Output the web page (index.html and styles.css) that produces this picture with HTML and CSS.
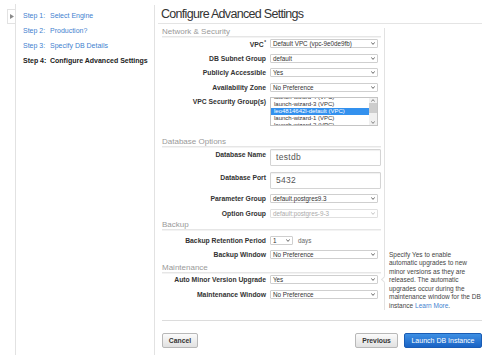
FILE: index.html
```html
<!DOCTYPE html>
<html lang="en">
<head>
    <meta charset="UTF-8">
    <title>Configure Advanced Settings</title>
    <link rel="stylesheet" href="styles.css">
</head>
<body>
    <div class="page">
        <!-- collapsed side tab -->
        <div class="edge">
            <div class="edge-tab">
                <svg width="4" height="5" viewBox="0 0 4 5"><polygon points="0,0 4,2.5 0,5" fill="#8a8a8a"/></svg>
            </div>
        </div>

        <!-- wizard steps -->
        <nav class="steps">
            <div class="step"><span class="step-num">Step 1:</span><a href="#">Select Engine</a></div>
            <div class="step"><span class="step-num">Step 2:</span><a href="#">Production?</a></div>
            <div class="step"><span class="step-num">Step 3:</span><a href="#">Specify DB Details</a></div>
            <div class="step current"><span class="step-num">Step 4:</span><span>Configure Advanced Settings</span></div>
        </nav>

        <main class="main">
            <h1 class="title">Configure Advanced Settings</h1>

            <div class="content">
                <div class="form">
                    <h2 class="section">Network &amp; Security</h2>
                    <div class="row">
                        <label>VPC<sup>*</sup></label>
                        <div class="select"><span>Default VPC (vpc-9e0de9fb)</span><svg width="4" height="3" viewBox="0 0 4 3"><polyline points="0.3,0.4 2,2.4 3.7,0.4" fill="none" stroke="#555" stroke-width="0.9"/></svg></div>
                    </div>
                    <div class="row">
                        <label>DB Subnet Group</label>
                        <div class="select"><span>default</span><svg width="4" height="3" viewBox="0 0 4 3"><polyline points="0.3,0.4 2,2.4 3.7,0.4" fill="none" stroke="#555" stroke-width="0.9"/></svg></div>
                    </div>
                    <div class="row">
                        <label>Publicly Accessible</label>
                        <div class="select"><span>Yes</span><svg width="4" height="3" viewBox="0 0 4 3"><polyline points="0.3,0.4 2,2.4 3.7,0.4" fill="none" stroke="#555" stroke-width="0.9"/></svg></div>
                    </div>
                    <div class="row">
                        <label>Availability Zone</label>
                        <div class="select"><span>No Preference</span><svg width="4" height="3" viewBox="0 0 4 3"><polyline points="0.3,0.4 2,2.4 3.7,0.4" fill="none" stroke="#555" stroke-width="0.9"/></svg></div>
                    </div>
                    <div class="row row-list">
                        <label>VPC Security Group(s)</label>
                        <div class="listbox">
                            <div class="list-items">
                                <div class="list-item">launch-wizard-4 (VPC)</div>
                                <div class="list-item">launch-wizard-3 (VPC)</div>
                                <div class="list-item selected">leo4814642l-default (VPC)</div>
                                <div class="list-item">launch-wizard-1 (VPC)</div>
                                <div class="list-item">launch-wizard-2 (VPC)</div>
                            </div>
                            <div class="scrollbar">
                                <svg width="4" height="3" viewBox="0 0 4 3"><polyline points="0.3,2.6 2,0.6 3.7,2.6" fill="none" stroke="#666" stroke-width="0.8"/></svg>
                                <div class="thumb"></div>
                                <svg width="4" height="3" viewBox="0 0 4 3"><polyline points="0.3,0.4 2,2.4 3.7,0.4" fill="none" stroke="#666" stroke-width="0.8"/></svg>
                            </div>
                        </div>
                    </div>

                    <h2 class="section">Database Options</h2>
                    <div class="row row-input">
                        <label>Database Name</label>
                        <div class="input">testdb</div>
                    </div>
                    <div class="row row-input">
                        <label>Database Port</label>
                        <div class="input">5432</div>
                    </div>
                    <div class="row">
                        <label>Parameter Group</label>
                        <div class="select"><span>default.postgres9.3</span><svg width="4" height="3" viewBox="0 0 4 3"><polyline points="0.3,0.4 2,2.4 3.7,0.4" fill="none" stroke="#555" stroke-width="0.9"/></svg></div>
                    </div>
                    <div class="row">
                        <label>Option Group</label>
                        <div class="select disabled"><span>default:postgres-9-3</span><svg width="4" height="3" viewBox="0 0 4 3"><polyline points="0.3,0.4 2,2.4 3.7,0.4" fill="none" stroke="#bbb" stroke-width="0.9"/></svg></div>
                    </div>

                    <h2 class="section section-tight">Backup</h2>
                    <div class="row row-first">
                        <label>Backup Retention Period</label>
                        <div class="select select-small"><span>1</span><svg width="4" height="3" viewBox="0 0 4 3"><polyline points="0.3,0.4 2,2.4 3.7,0.4" fill="none" stroke="#555" stroke-width="0.9"/></svg></div>
                        <span class="unit">days</span>
                    </div>
                    <div class="row">
                        <label>Backup Window</label>
                        <div class="select"><span>No Preference</span><svg width="4" height="3" viewBox="0 0 4 3"><polyline points="0.3,0.4 2,2.4 3.7,0.4" fill="none" stroke="#555" stroke-width="0.9"/></svg></div>
                    </div>

                    <h2 class="section">Maintenance</h2>
                    <div class="row row-pointer">
                        <label>Auto Minor Version Upgrade</label>
                        <div class="select"><span>Yes</span><svg width="4" height="3" viewBox="0 0 4 3"><polyline points="0.3,0.4 2,2.4 3.7,0.4" fill="none" stroke="#555" stroke-width="0.9"/></svg></div>
                    </div>
                    <div class="row">
                        <label>Maintenance Window</label>
                        <div class="select"><span>No Preference</span><svg width="4" height="3" viewBox="0 0 4 3"><polyline points="0.3,0.4 2,2.4 3.7,0.4" fill="none" stroke="#555" stroke-width="0.9"/></svg></div>
                    </div>
                </div>

                <div class="help">
                    Specify Yes to enable<br>
                    automatic upgrades to new<br>
                    minor versions as they are<br>
                    released. The automatic<br>
                    upgrades occur during the<br>
                    maintenance window for the DB<br>
                    instance <a href="#">Learn More</a>.
                </div>
            </div>

            <div class="actions">
                <button class="btn">Cancel</button>
                <div class="actions-right">
                    <button class="btn">Previous</button>
                    <button class="btn btn-primary">Launch DB Instance</button>
                </div>
            </div>
        </main>
    </div>
</body>
</html>
```

FILE: styles.css
```css
body {
    margin: 0;
    font-family: "Liberation Sans", Arial, sans-serif;
    background-color: #fff;
    color: #333;
}

a {
    color: #3f7fcf;
    text-decoration: none;
}

.page {
    display: flex;
    height: 355px;
    overflow: hidden;
}

/* Collapsed side tab */
.edge {
    width: 15px;
    margin-top: 4px;
    border-right: 1px solid #e2e2e2;
}

.edge-tab {
    display: flex;
    align-items: center;
    justify-content: center;
    width: 7px;
    height: 13px;
    margin: 5px 0 0 7px;
    border: 1px solid #e2e2e2;
    border-right: none;
}

/* Wizard steps */
.steps {
    width: 131px;
    margin-top: 5px;
    padding: 2.5px 0 0 7px;
    border-right: 1px solid #e2e2e2;
    font-size: 7px;
}

.step {
    display: flex;
    height: 15.3px;
    line-height: 15px;
    color: #3f7fcf;
    white-space: nowrap;
}

.step-num {
    width: 27px;
}

.step.current {
    color: #222;
    font-weight: bold;
}

/* Main area */
.main {
    width: 324px;
    padding-left: 3px;
}

.title {
    margin: 7px 0 0;
    padding: 0 0 1px 3px;
    height: 15px;
    line-height: 15px;
    font-size: 12.5px;
    font-weight: normal;
    letter-spacing: -0.7px;
    color: #333;
    border-bottom: 1px solid #e4e4e4;
}

.content {
    display: flex;
    margin-top: 4px;
}

.form {
    width: 219px;
    height: 282px;
    padding: 0 3px 0 4px;
    border-right: 1px solid #e2e2e2;
}

.section {
    margin: 0;
    height: 8px;
    line-height: 8px;
    font-size: 8px;
    font-weight: normal;
    color: #999;
    border-bottom: 1px solid #e6e6e6;
    box-shadow: 0 1px 0 #f3f3f3;
    margin-bottom: 2px;
}

.row {
    display: flex;
    align-items: center;
    gap: 4px;
    height: 9px;
    margin-bottom: 5.5px;
    position: relative;
}

.row label {
    width: 104px;
    flex-shrink: 0;
    text-align: right;
    font-size: 6.8px;
    font-weight: bold;
    color: #333;
    white-space: nowrap;
}

.row label sup {
    font-size: 4.5px;
    vertical-align: 3px;
    margin-left: 0.5px;
}

.select {
    display: flex;
    align-items: center;
    justify-content: space-between;
    box-sizing: border-box;
    width: 108px;
    height: 9px;
    padding: 0 2px 0 2px;
    border: 1px solid #cfcfcf;
    border-radius: 1px;
    font-size: 6.3px;
    color: #333;
    white-space: nowrap;
}

.select.disabled {
    color: #aaa;
    border-color: #e0e0e0;
}

.select-small {
    width: 23px;
}

.unit {
    margin-left: 1px;
    font-size: 6.3px;
    color: #666;
}

/* Security group list */
.row-list {
    align-items: flex-start;
    height: 29px;
    margin-bottom: 12px;
}

.row-list label {
    line-height: 9px;
}

.listbox {
    display: flex;
    box-sizing: border-box;
    width: 108px;
    height: 29px;
    border: 1px solid #c4c4c4;
    overflow: hidden;
}

.list-items {
    flex: 1;
    margin-top: -4.5px;
}

.list-item {
    height: 7px;
    line-height: 7px;
    padding-left: 3px;
    font-size: 6px;
    color: #333;
    white-space: nowrap;
}

.list-item.selected {
    background-color: #3391ee;
    color: #fff;
}

.scrollbar {
    display: flex;
    flex-direction: column;
    align-items: center;
    justify-content: space-between;
    width: 8px;
    padding: 1px 0;
    background-color: #f0f0f0;
}

.scrollbar .thumb {
    width: 8px;
    height: 10px;
    margin-bottom: 7px;
    background-color: #cdcdcd;
}

/* Text inputs */
.row-input {
    align-items: flex-start;
    height: 17px;
}

.row-input label {
    padding-top: 1px;
    line-height: 9px;
}

.input {
    box-sizing: border-box;
    width: 111px;
    height: 17px;
    padding-left: 5px;
    line-height: 15px;
    border: 1px solid #d4d4d4;
    border-radius: 1px;
    box-shadow: inset 0 1px 1px #f0f0f0;
    font-size: 8.5px;
    letter-spacing: 0.3px;
    color: #555;
}

.section-tight {
    margin-top: -2.5px;
}

.row-first {
    margin-top: 6px;
    margin-bottom: 5px;
}

.section + .row-pointer {
    margin-top: 2px;
}

/* Tooltip notch pointing at the upgrade row */
.row-pointer::after {
    content: "";
    position: absolute;
    right: -6px;
    top: 1.5px;
    width: 4px;
    height: 4px;
    background-color: #fff;
    border-left: 1px solid #e2e2e2;
    border-bottom: 1px solid #e2e2e2;
    transform: rotate(45deg);
}

.help {
    align-self: flex-end;
    width: 93px;
    padding-left: 4px;
    font-size: 6.5px;
    line-height: 8.5px;
    color: #444;
    white-space: nowrap;
}

/* Buttons */
.actions {
    display: flex;
    justify-content: space-between;
    margin: 10px 0 0 4px;
    padding-top: 12px;
    border-top: 1px solid #dcdcdc;
}

.actions-right {
    display: flex;
    gap: 6px;
}

.btn {
    height: 15px;
    padding: 0;
    border: 1px solid #b8b8b8;
    border-radius: 2px;
    background: linear-gradient(#fbfbfb, #e1e1e1);
    font-family: "Liberation Sans", Arial, sans-serif;
    font-size: 6.8px;
    font-weight: bold;
    color: #333;
    width: 36px;
}

.actions-right .btn {
    width: 43px;
}

.actions-right .btn-primary {
    width: 78px;
    border-color: #1a5cb4;
    background: linear-gradient(#3d8fe4, #1a63c4);
    font-weight: normal;
    font-size: 7px;
    color: #fff;
}
```
